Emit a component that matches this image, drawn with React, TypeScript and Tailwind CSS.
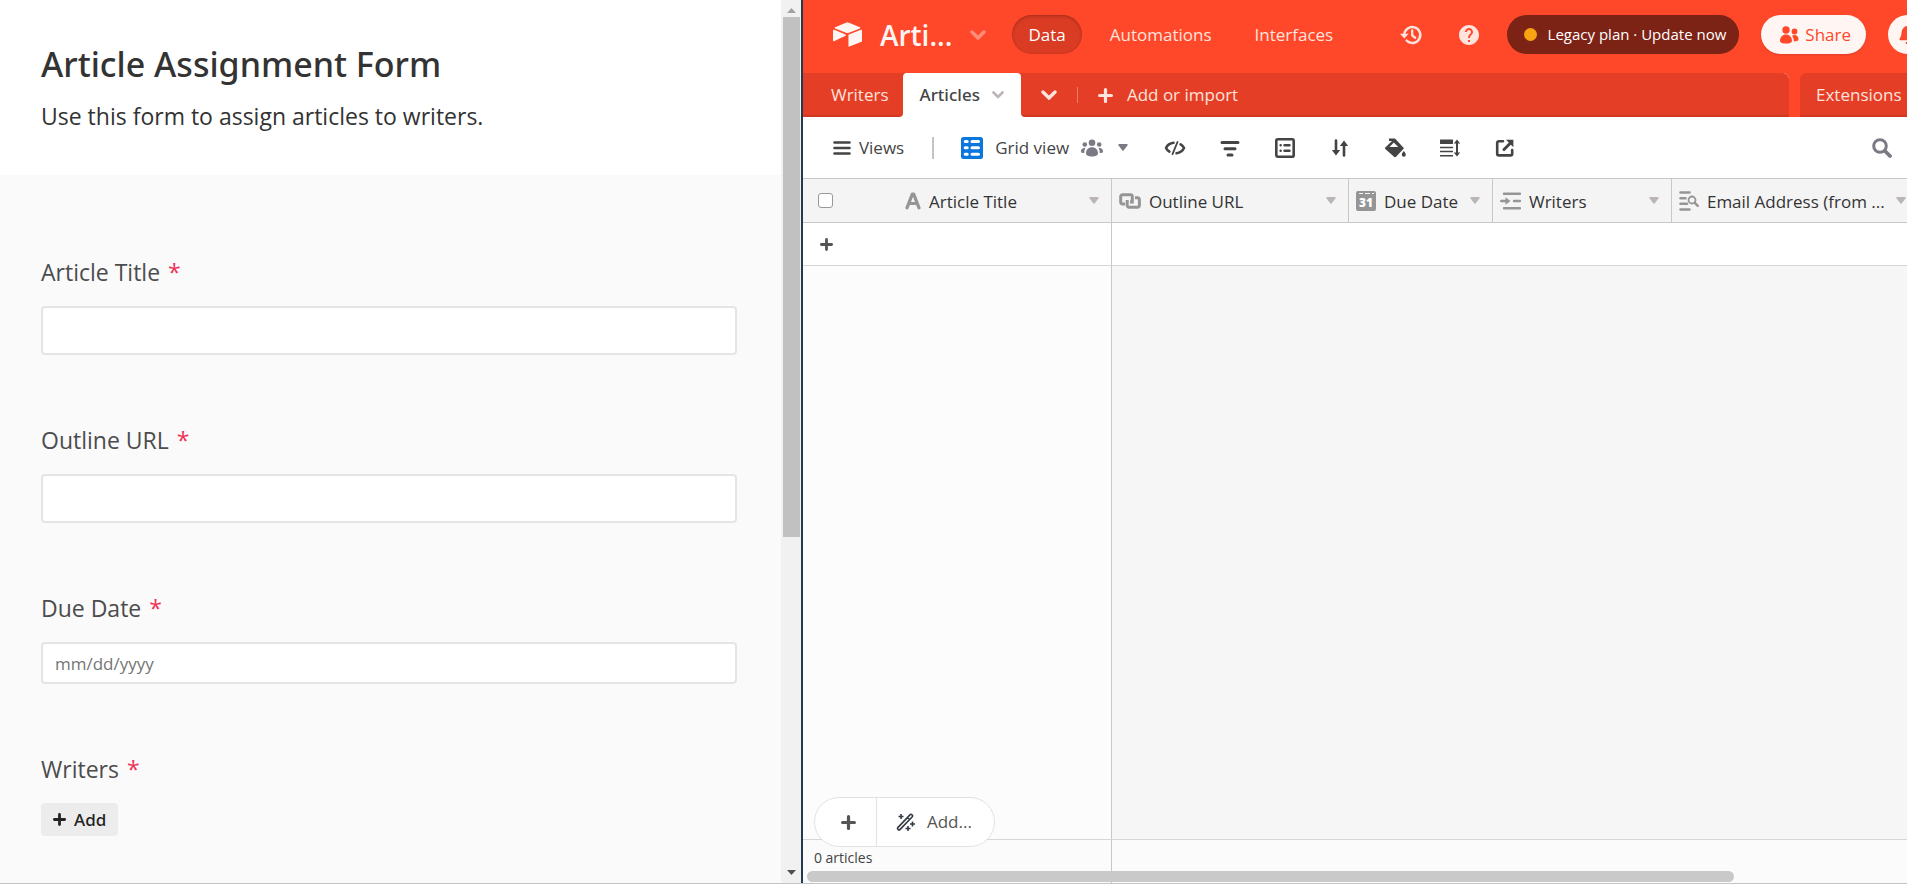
import { ReactNode } from 'react';
import { SiAirtable } from 'react-icons/si';
import { MdHelp } from 'react-icons/md';

type IconName = 'text' | 'link' | 'date' | 'linked' | 'lookup';

interface Column {
  label: string;
  icon: IconName;
  width: string;
}

const COLUMNS: Column[] = [
  { label: 'Outline URL', icon: 'link', width: 'w-[237px]' },
  { label: 'Due Date', icon: 'date', width: 'w-[144px]' },
  { label: 'Writers', icon: 'linked', width: 'w-[179px]' },
  { label: 'Email Address (from ...', icon: 'lookup', width: 'w-[247px]' },
];

function Svg({ w, h, className = '', children }: { w: number; h: number; className?: string; children: ReactNode }) {
  return (
    <svg width={w} height={h} viewBox={`0 0 ${w} ${h}`} className={`shrink-0 ${className}`} fill="currentColor" aria-hidden="true">
      {children}
    </svg>
  );
}

function Chevron({ className }: { className?: string }) {
  return (
    <Svg w={16} h={10} className={className}>
      <path d="M2 2l6 6 6-6" fill="none" stroke="currentColor" strokeWidth="3.4" strokeLinecap="round" />
    </Svg>
  );
}

function Caret({ className }: { className?: string }) {
  return (
    <Svg w={10} h={7} className={className}>
      <path d="M1 0h8a.8.8 0 0 1 .6 1.3L5.6 6.5a.8.8 0 0 1-1.2 0L.4 1.3A.8.8 0 0 1 1 0z" />
    </Svg>
  );
}

function Plus({ size, className }: { size: number; className?: string }) {
  return (
    <svg width={size} height={size} viewBox="0 0 14 14" className={`shrink-0 ${className ?? ''}`} aria-hidden="true">
      <path d="M7 1.5v11M1.5 7h11" stroke="currentColor" strokeWidth="3" strokeLinecap="round" />
    </svg>
  );
}

function FieldIcon({ name }: { name: IconName }) {
  switch (name) {
    case 'text':
      return (
        <Svg w={16} h={18}>
          <path d="M2 15.8L7.3 2.2h1.4L14 15.8M4.5 11.5h7" fill="none" stroke="currentColor" strokeWidth="3.2" strokeLinecap="round" strokeLinejoin="round" />
        </Svg>
      );
    case 'link':
      return (
        <Svg w={22} h={16}>
          <path d="M6 11H3.5A1.8 1.8 0 0 1 1.7 9.2V3.5A1.8 1.8 0 0 1 3.5 1.7h8A1.8 1.8 0 0 1 13.3 3.5V9H11" fill="none" stroke="currentColor" strokeWidth="3" />
          <path d="M16 4.8h2.6A1.8 1.8 0 0 1 20.4 6.6v5.800a1.8 1.8 0 0 1-1.8 1.8H10a1.8 1.8 0 0 1-1.8-1.8V7" fill="none" stroke="currentColor" strokeWidth="3" />
        </Svg>
      );
    case 'date':
      return (
        <Svg w={20} h={20}>
          <rect width="20" height="20" rx="2" />
          <path d="M3 2.5h4M9 2.5h5M16 2.5h2" stroke="#f4f4f4" strokeWidth="1" />
          <text x="10" y="16" textAnchor="middle" fill="#fff" fontFamily="Open Sans, sans-serif" fontSize="12" fontWeight="800">31</text>
        </Svg>
      );
    case 'linked':
      return (
        <Svg w={21} h={18}>
          <path d="M4 1.8h16M14 9h6M4 16.2h16M1.2 9h6" stroke="currentColor" strokeWidth="2.4" strokeLinecap="round" />
          <path d="M5.5 5.2L10.5 9l-5 3.8z" />
        </Svg>
      );
    case 'lookup':
      return (
        <Svg w={20} h={20}>
          <path d="M1.5 1.5h9M1.5 7.2h5M1.5 12.8h6.5M1.5 18.5h9" stroke="currentColor" strokeWidth="2.6" strokeLinecap="round" />
          <circle cx="13" cy="9" r="3.5" fill="none" stroke="currentColor" strokeWidth="1.8" />
          <path d="M15.8 11.8l3 3" stroke="currentColor" strokeWidth="2.4" strokeLinecap="round" />
        </Svg>
      );
  }
}

const TOOLS: { label: string; icon: ReactNode }[] = [
  {
    label: 'Hide fields',
    icon: (
      <Svg w={22} h={20}>
        <path d="M13.5 4L8.5 16.2" stroke="currentColor" strokeWidth="1.8" strokeLinecap="round" />
        <path d="M9.5 4.800C6 5.2 3.4 7 2 10c.8 1.6 1.9 2.8 3.4 3.7M12.5 15.3C16 14.8 18.6 13 20 10c-.8-1.6-1.9-2.8-3.4-3.7" fill="none" stroke="currentColor" strokeWidth="2.6" strokeLinecap="round" strokeLinejoin="round" />
      </Svg>
    ),
  },
  {
    label: 'Filter',
    icon: (
      <Svg w={22} h={20}>
        <path d="M3 4.5h16M6 10.8h10M9 17h4" stroke="currentColor" strokeWidth="3" strokeLinecap="round" />
      </Svg>
    ),
  },
  {
    label: 'Group',
    icon: (
      <Svg w={22} h={20}>
        <rect x="2.3" y="1.3" width="17.4" height="17.4" rx="1.5" fill="none" stroke="currentColor" strokeWidth="2.6" />
        <path d="M10.5 7.2h5M10.5 12.8h5M6.6 7.2h.1M6.6 12.8h.1" stroke="currentColor" strokeWidth="2.4" strokeLinecap="round" />
      </Svg>
    ),
  },
  {
    label: 'Sort',
    icon: (
      <Svg w={22} h={20}>
        <path d="M7 2.5v12M15 5.5v12" stroke="currentColor" strokeWidth="2.6" strokeLinecap="round" />
        <path d="M2.8 12h8.4L7 17.5zM10.8 8h8.4L15 2.5z" />
      </Svg>
    ),
  },
  {
    label: 'Color',
    icon: (
      <Svg w={22} h={20}>
        <path d="M5 .5h6l9 9.8-7.5 8a2 2 0 0 1-3 0L1.3 11a1 1 0 0 1 0-1.4L8 3H5zM9.8 4.5L5.500 9h8.8z" fillRule="evenodd" />
        <path d="M19.8 13c1.2 1.6 2 2.6 2 3.7a2 2 0 0 1-4 0c0-1.1.8-2.1 2-3.7z" />
      </Svg>
    ),
  },
  {
    label: 'Row height',
    icon: (
      <Svg w={22} h={20}>
        <rect x="1" y="1.5" width="13" height="4.5" rx="0.5" />
        <path d="M1 9.5h13M1 13.5h13M1 17.8h13" stroke="currentColor" strokeWidth="1.6" />
        <path d="M18 5v10" stroke="currentColor" strokeWidth="2" />
        <path d="M14.8 5.5h6.4L18 1.5zM14.8 14.5h6.4L18 18.5z" />
      </Svg>
    ),
  },
  {
    label: 'Share view',
    icon: (
      <Svg w={22} h={20}>
        <path d="M9 3.2H4.8A1.6 1.6 0 0 0 3.2 4.8v11a1.6 1.6 0 0 0 1.6 1.6h11.8a1.6 1.6 0 0 0 1.6-1.6V12" fill="none" stroke="currentColor" strokeWidth="2.6" strokeLinecap="round" />
        <path d="M10 11.5L16 5.5" stroke="currentColor" strokeWidth="3" strokeLinecap="round" />
        <path d="M12 1.8h7.4v7.4z" />
      </Svg>
    ),
  },
];

function FormField({ id, label, placeholder, height }: { id: string; label: string; placeholder?: string; height: string }) {
  return (
    <div>
      <label htmlFor={id} className="mb-[18px] block text-[23px] leading-8 text-[#4c4c4e]">
        {label} <span className="pl-0.5 text-[#ef3055]">*</span>
      </label>
      <input
        id={id}
        type="text"
        placeholder={placeholder}
        className={`block w-full rounded-sm border-2 border-[#e5e5e5] bg-white px-3 text-[17px] text-[#333] placeholder:text-[#757575] ${height}`}
      />
    </div>
  );
}

function FormPane() {
  return (
    <section className="flex w-[42%] shrink-0">
      <form className="min-w-0 flex-1 overflow-hidden bg-[#fafafa]">
        <header className="h-[175px] bg-white pt-10 pr-11 pl-[41px]">
          <h1 className="font-['Noto_Sans','Open_Sans',sans-serif] text-[34px] leading-[48px] font-medium text-[#333]">Article Assignment Form</h1>
          <p className="mt-3 text-[23px] leading-8 text-[#333]">Use this form to assign articles to writers.</p>
        </header>
        <div className="flex flex-col gap-[69px] pt-[81px] pr-11 pl-[41px]">
          <FormField id="article-title" label="Article Title" height="h-[49px]" />
          <FormField id="outline-url" label="Outline URL" height="h-[49px]" />
          <FormField id="due-date" label="Due Date" placeholder="mm/dd/yyyy" height="h-[42px]" />
          <div>
            <p className="mb-[18px] text-[23px] leading-8 text-[#4c4c4e]">
              Writers <span className="pl-0.5 text-[#ef3055]">*</span>
            </p>
            <button type="button" className="flex h-[33px] items-center gap-2 rounded-sm bg-[#ececec] px-3 font-['Noto_Sans','Open_Sans',sans-serif] text-[17px] font-medium text-[#222]">
              <Plus size={13} />
              Add
            </button>
          </div>
        </div>
      </form>

      {/* Scrollbar */}
      <div className="flex w-5 shrink-0 flex-col items-center bg-[#f1f1f1] py-1 pl-0.5">
        <Svg w={9} h={5} className="mt-1 mb-1 text-[#a3a3a3]">
          <path d="M0 5L4.5 0 9 5z" />
        </Svg>
        <div className="w-[17px] flex-1">
          <div className="h-[61%] bg-[#c1c1c1]" />
        </div>
        <Svg w={9} h={5} className="mb-1 text-[#505050]">
          <path d="M0 0l4.5 5L9 0z" />
        </Svg>
      </div>
    </section>
  );
}

function BaseHeader() {
  return (
    <header className="-mr-5 flex h-[73px] items-start justify-between bg-[#ff482a] pt-[15px] pl-[30px] text-[17px] text-[#ffe3dd]">
      <div className="flex h-[39px] shrink-0 items-center">
        <SiAirtable className="size-[29px] text-[#fff5f3]" />
        <h2 className="ml-[18px] text-[28px] font-semibold text-[#fff5f3]">Arti...</h2>
        <Chevron className="ml-[18px] text-[#ff8d79]" />
        <nav className="ml-[26px] flex items-center">
          <button className="h-[39px] rounded-full bg-[#d93b23] px-4 text-white shadow-[inset_0_1px_3px_rgba(0,0,0,0.25)]">Data</button>
          <button className="ml-7">Automations</button>
          <button className="ml-[43px]">Interfaces</button>
        </nav>
      </div>
      <div className="flex h-[39px] shrink-0 items-center">
        <button aria-label="History">
          <Svg w={24} h={24}>
            <path d="M5.3 11.500a8 8 0 1 1 2.400 6.200" fill="none" stroke="currentColor" strokeWidth="2.5" strokeLinecap="round" />
            <path d="M13.200 7.500v5l3 2.200" fill="none" stroke="currentColor" strokeWidth="2.300" strokeLinecap="round" strokeLinejoin="round" />
            <path d="M1 10.800h8.600L5.300 15.500z" />
          </Svg>
        </button>
        <button aria-label="Help" className="ml-[34px]"><MdHelp className="size-6" /></button>
        <button className="ml-[26px] flex h-[39px] items-center rounded-full bg-[#7d2316] pr-[13px] pl-[17px] text-[15px] text-white">
          <span className="mr-[11px] size-[13px] rounded-full bg-[#f8a312]" />
          Legacy plan · Update now
        </button>
        <button className="ml-[22px] flex h-[39px] items-center gap-[6px] rounded-full bg-[#fff5f3] pr-[15px] pl-[18px] text-[#ff482a] shadow-sm">
          <Svg w={20} h={18}>
            <circle cx="7" cy="4" r="3.7" />
            <circle cx="15.5" cy="5.5" r="2.9" />
            <path d="M1 15c0-3.8 2.5-6.4 6-6.4s6 2.6 6 6.4c0 1.7-2.7 2.6-6 2.6S1 16.7 1 15zM13 9.8c.8-.5 1.6-.7 2.5-.7 2.4 0 4 1.7 4 4.4 0 1.3-1.9 2-4.6 2-.1-2.2-.7-4.2-1.900-5.7z" />
          </Svg>
          Share
        </button>
        <button aria-label="Notifications" className="ml-[22px] flex size-[39px] items-center justify-center rounded-full bg-[#fff5f3] text-[#ff482a]">
          <Svg w={18} h={20}>
            <path d="M9 1a6.5 6.5 0 0 1 6.5 6.5c0 3 .8 4.5 1.9 6.2.4.7 0 1.6-.9 1.6H1.5c-.9 0-1.300-.9-.9-1.6C1.7 12 2.5 10.5 2.5 7.5A6.5 6.5 0 0 1 9 1zM6.5 17h5a2.5 2.5 0 0 1-5 0z" />
          </Svg>
        </button>
      </div>
    </header>
  );
}

// Tab strip background: darker line where it meets the view bar
const STRIP = 'bg-[#e53e26] bg-linear-to-t from-[#c93620] from-0% to-[#e53e26] to-8%';

function TableTabs() {
  return (
    <div className="flex h-11 items-stretch bg-[#ff482a] text-[17px] text-[#ffe3dd]">
      <div className="flex flex-1 items-stretch rounded-tr-md bg-white">
        <button className={`rounded-br-sm pr-[14px] pl-7 ${STRIP}`}>Writers</button>
        <div className="flex bg-linear-to-b from-[#e53e26] from-50% to-white to-50%">
          <button className="flex items-center gap-3 rounded-t-sm bg-white px-[17px] font-['Noto_Sans','Open_Sans',sans-serif] font-medium text-[#444]">
            Articles
            <Svg w={12} h={8} className="text-[#bbb5b8]">
              <path d="M1.5 1.5L6 6l4.5-4.5" fill="none" stroke="currentColor" strokeWidth="2.6" strokeLinecap="round" />
            </Svg>
          </button>
        </div>
        <div className={`flex flex-1 items-stretch rounded-tr-md rounded-bl-sm ${STRIP}`}>
          <button aria-label="All tables" className="px-5"><Chevron /></button>
          <span className="h-4 w-px self-center bg-[#ef7a66]" />
          <button className="ml-5 flex items-center gap-[14px]">
            <Plus size={15} />
            Add or import
          </button>
        </div>
      </div>
      <button className={`ml-[11px] w-[107px] rounded-tl-md pl-4 text-left ${STRIP}`}>Extensions</button>
    </div>
  );
}

function ViewBar() {
  return (
    <div className="flex h-[61px] items-center bg-white pl-[30px] text-[17px] text-[#444]">
      <button className="flex items-center gap-2">
        <Svg w={18} h={14}>
          <path d="M1.5 1.5h15M1.5 7h15M1.5 12.5h15" stroke="currentColor" strokeWidth="2.6" strokeLinecap="round" />
        </Svg>
        Views
      </button>
      <span className="ml-7 h-[22px] w-0.5 bg-[#c4c4c4]" />
      <button className="ml-[27px] flex items-center">
        <Svg w={22} h={22} className="text-[#0b76dc]">
          <rect width="22" height="22" rx="2.5" />
          <path d="M4.2 4.500h2M11 4.500h6.500M4.2 10.800h2M11 10.800h6.500M4.2 17.200h2M11 17.200h6.500" stroke="#fff" strokeWidth="3" strokeLinecap="round" />
        </Svg>
        <span className="ml-3">Grid view</span>
        <Svg w={22} h={18} className="ml-3 text-[#7b7984]">
          <circle cx="11" cy="3.8" r="3.3" />
          <circle cx="3.8" cy="5.5" r="2.3" />
          <circle cx="18.2" cy="5.5" r="2.3" />
          <path d="M5 14.500c0-4 2.300-6.300 6-6.300s6 2.300 6 6.300c0 1.800-2.700 3-6 3s-6-1.200-6-3zM0 12.500C0 10 1.500 8.800 4.600 8.800 3.600 10.200 3.300 12 3.300 14 1.300 14 0 13.500 0 12.500zM22 12.500c0-2.500-1.500-3.700-4.600-3.700 1 1.400 1.300 3.200 1.300 5.200 2 0 3.300-.5 3.300-1.500z" />
        </Svg>
        <Caret className="ml-[15px] text-[#7b7984]" />
      </button>
      <div className="ml-9 flex gap-[33px]">
        {TOOLS.map(t => (
          <button key={t.label} aria-label={t.label}>{t.icon}</button>
        ))}
      </div>
      <button aria-label="Search" className="mr-[15px] ml-auto text-[#7b7984]">
        <Svg w={20} h={20}>
          <circle cx="8" cy="8" r="6.3" fill="none" stroke="currentColor" strokeWidth="3" />
          <path d="M13 13l5 5" stroke="currentColor" strokeWidth="3.8" strokeLinecap="round" />
        </Svg>
      </button>
    </div>
  );
}

function Grid() {
  return (
    <div className="relative flex min-h-0 flex-1 flex-col">
      <table className="w-[1116px] shrink-0 table-fixed border-separate border-spacing-0 text-left text-[17px] text-[#333]">
        <thead>
          <tr className="h-[45px] bg-[#f4f4f4]">
            <th className="w-[309px] border-y border-r border-[#c8c8c8] p-0 font-normal">
              <div className="flex items-center pr-3 pl-[15px]">
                <input type="checkbox" aria-label="Select all" className="mr-[72px] size-[15px] shrink-0 appearance-none rounded-[3px] border border-[#999] bg-white" />
                <span className="mr-2 text-[#959595]"><FieldIcon name="text" /></span>
                <span className="flex-1 pt-0.5">Article Title</span>
                <Caret className="text-[#bbb5b8]" />
              </div>
            </th>
            {COLUMNS.map(c => (
              <th key={c.label} className={`border-y border-r border-[#c8c8c8] p-0 font-normal ${c.width}`}>
                <div className="flex items-center gap-2 pr-3 pl-[7px]">
                  <span className="text-[#959595]"><FieldIcon name={c.icon} /></span>
                  <span className="flex-1 pt-0.5 whitespace-nowrap">{c.label}</span>
                  <Caret className="text-[#bbb5b8]" />
                </div>
              </th>
            ))}
          </tr>
        </thead>
        <tbody>
          <tr className="h-[43px] bg-white">
            <td className="border-r border-b border-[#d6d6d6] border-r-[#c8c8c8] p-0">
              <button aria-label="Add record" className="ml-[17px] block text-[#555]"><Plus size={13} /></button>
            </td>
            <td colSpan={4} className="border-b border-[#d6d6d6]" />
          </tr>
        </tbody>
      </table>

      {/* Empty area under the last record */}
      <div className="flex flex-1">
        <div className="w-[309px] border-r border-[#c8c8c8] bg-[#fcfcfc]" />
        <div className="flex-1 bg-[#f6f6f6]" />
      </div>

      {/* Summary bar */}
      <footer className="flex h-11 border-t border-[#d6d6d6] bg-[#fbfbfb] text-sm text-[#444]">
        <div className="w-[309px] border-r border-[#c8c8c8] pt-2 pl-[11px]">0 articles</div>
      </footer>
      <div className="absolute bottom-px left-1 h-[11px] w-[84%] rounded-full bg-[#c9c9c9]" />

      <div className="absolute bottom-9 left-[11px] flex h-[50px] items-stretch rounded-full border border-[#e2e2e2] bg-white text-[17px] text-[#555]">
        <button aria-label="Add record" className="border-r border-[#e2e2e2] pr-5 pl-[26px]"><Plus size={15} /></button>
        <button className="flex items-center gap-3 pr-[22px] pl-[19px]">
          <Svg w={19} h={18} className="text-[#333a44]">
            <path d="M1.8 14.6L14.2 1.6a1.100 1.100 0 0 1 1.600 0l.5.5a1.100 1.100 0 0 1 0 1.600L3.900 16.600a1.100 1.100 0 0 1-1.600 0l-.5-.5a1.100 1.100 0 0 1 0-1.500zM11.500 4.500l2 2" fill="none" stroke="currentColor" strokeWidth="1.6" />
            <path d="M5 1v5M2.5 3.5h5M12 13v5M9.5 15.5h5M16.5 8.5v5M14 11h5" stroke="currentColor" strokeWidth="1.6" />
          </Svg>
          Add...
        </button>
      </div>
    </div>
  );
}

export default function App() {
  return (
    <main className="flex h-screen overflow-hidden border-b border-[#c4c4c4] bg-white font-['Open_Sans','Noto_Sans',sans-serif]">
      <FormPane />
      <section className="flex min-w-0 flex-1 flex-col overflow-hidden border-l-2 border-[#22394f]">
        <BaseHeader />
        <TableTabs />
        <ViewBar />
        <Grid />
      </section>
    </main>
  );
}
